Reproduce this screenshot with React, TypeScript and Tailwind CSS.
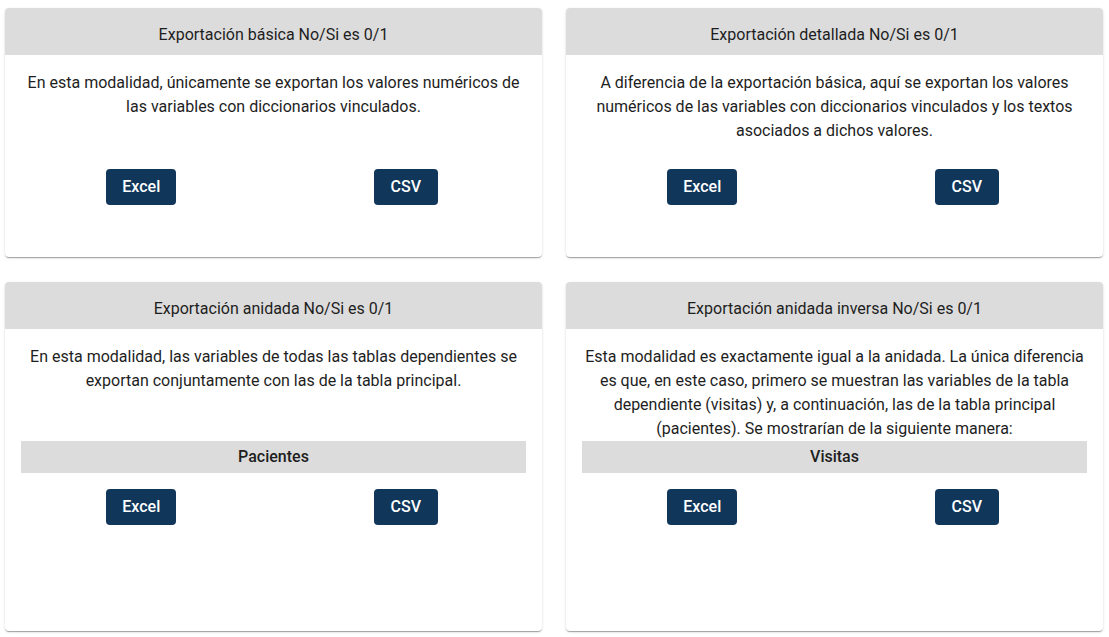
import React from "react";

const font = { fontFamily: "Roboto, 'Liberation Sans', sans-serif" };

function Buttons() {
  return (
    <div className="grid grid-cols-2 px-1 justify-items-center">
      <button className="h-9 px-4 rounded bg-[#10365a] text-white text-[16px] font-medium">Excel</button>
      <button className="h-9 px-[17px] rounded bg-[#10365a] text-white text-[16px] font-medium">CSV</button>
    </div>
  );
}

function Card({
  title,
  text,
  sub,
  tall,
}: {
  title: string;
  text: string;
  sub?: string;
  tall?: boolean;
}) {
  return (
    <div
      className={`bg-white rounded overflow-hidden shadow-[0_2px_1px_-1px_rgba(0,0,0,0.2),0_1px_1px_0_rgba(0,0,0,0.14),0_1px_3px_0_rgba(0,0,0,0.12)] ${
        tall ? "h-[349px]" : "h-[249px]"
      }`}
    >
      <div className="h-[47px] bg-[#dcdcdc] pt-[15px] text-center leading-6 text-[16px] text-[#1e1e1e]">
        {title}
      </div>
      <div
        className={`px-4 pt-4 text-center text-[16px] leading-6 text-[#1e1e1e] ${
          tall ? "h-[112px]" : "h-[114px]"
        }`}
      >
        {text}
      </div>
      {sub && (
        <div className="mx-4 h-8 bg-[#dcdcdc] flex items-center justify-center text-[16px] font-medium text-[#1e1e1e] mb-4">
          {sub}
        </div>
      )}
      <Buttons />
    </div>
  );
}

export default function App() {
  return (
    <div className="bg-white w-[1109px] h-[637px] pl-[5px] pr-[6px] pt-2" style={font}>
      <div className="grid grid-cols-2 gap-x-6 gap-y-[25px]">
        <Card
          title="Exportación básica No/Si es 0/1"
          text="En esta modalidad, únicamente se exportan los valores numéricos de las variables con diccionarios vinculados."
        />
        <Card
          title="Exportación detallada No/Si es 0/1"
          text="A diferencia de la exportación básica, aquí se exportan los valores numéricos de las variables con diccionarios vinculados y los textos asociados a dichos valores."
        />
        <Card
          tall
          title="Exportación anidada No/Si es 0/1"
          text="En esta modalidad, las variables de todas las tablas dependientes se exportan conjuntamente con las de la tabla principal."
          sub="Pacientes"
        />
        <Card
          tall
          title="Exportación anidada inversa No/Si es 0/1"
          text="Esta modalidad es exactamente igual a la anidada. La única diferencia es que, en este caso, primero se muestran las variables de la tabla dependiente (visitas) y, a continuación, las de la tabla principal (pacientes). Se mostrarían de la siguiente manera:"
          sub="Visitas"
        />
      </div>
    </div>
  );
}
